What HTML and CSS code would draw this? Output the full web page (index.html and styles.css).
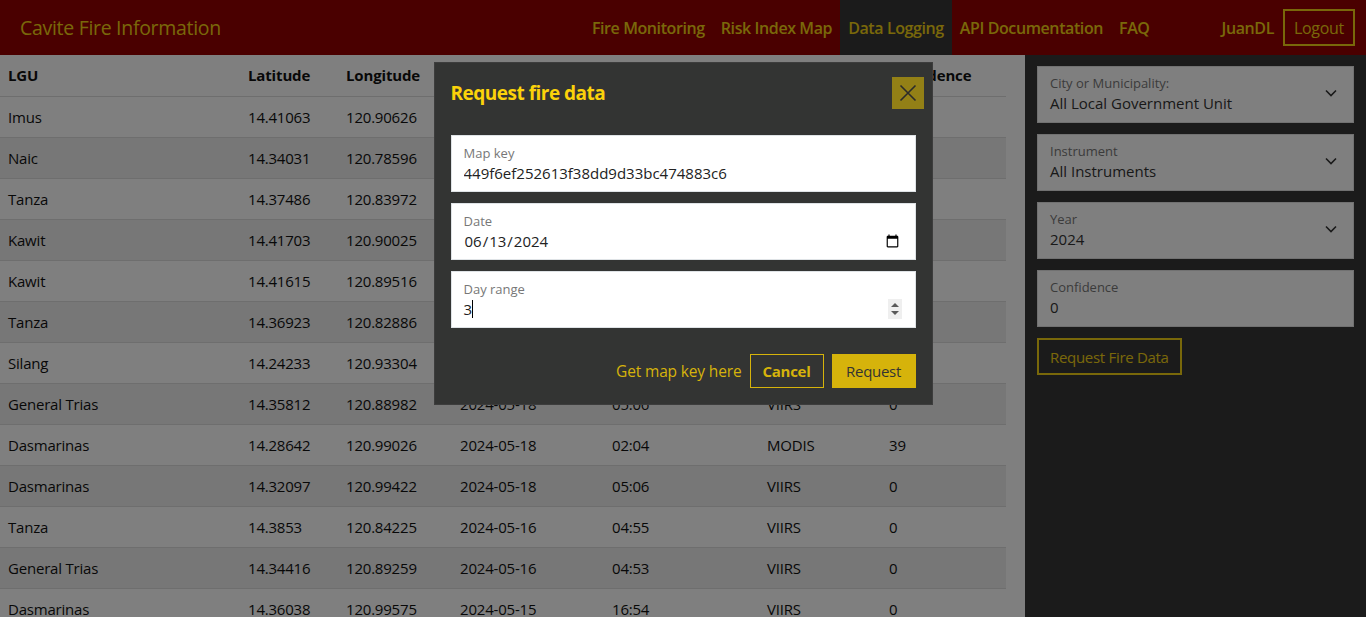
FILE: index.html
```html
<!DOCTYPE html>
<html lang="en">
<head>
<meta charset="utf-8">
<title>Cavite Fire Information - Data Logging</title>
<link rel="stylesheet" href="styles.css">
</head>
<body>
<header class="topbar">
  <a class="brand" href="#">Cavite Fire Information</a>
  <nav class="nav">
    <a class="nav-link" href="#">Fire Monitoring</a>
    <a class="nav-link" href="#">Risk Index Map</a>
    <a class="nav-link active" href="#">Data Logging</a>
    <a class="nav-link" href="#">API Documentation</a>
    <a class="nav-link" href="#">FAQ</a>
  </nav>
  <div class="user">
    <a class="nav-link user-name" href="#">JuanDL</a>
    <button class="btn-outline logout">Logout</button>
  </div>
</header>

<div class="layout">
  <main class="main">
    <table class="data-table">
      <colgroup>
        <col class="c-lgu"><col class="c-lat"><col class="c-lon"><col class="c-date"><col class="c-time"><col class="c-inst"><col class="c-conf">
      </colgroup>
      <thead>
        <tr><th>LGU</th><th>Latitude</th><th>Longitude</th><th>Date</th><th>Time</th><th>Instrument</th><th>Confidence</th></tr>
      </thead>
      <tbody>
        <tr><td>Imus</td><td>14.41063</td><td>120.90626</td><td>2024-05-23</td><td>05:12</td><td>VIIRS</td><td>0</td></tr>
        <tr><td>Naic</td><td>14.34031</td><td>120.78596</td><td>2024-05-22</td><td>04:50</td><td>VIIRS</td><td>0</td></tr>
        <tr><td>Tanza</td><td>14.37486</td><td>120.83972</td><td>2024-05-22</td><td>04:50</td><td>VIIRS</td><td>0</td></tr>
        <tr><td>Kawit</td><td>14.41703</td><td>120.90025</td><td>2024-05-21</td><td>05:08</td><td>VIIRS</td><td>0</td></tr>
        <tr><td>Kawit</td><td>14.41615</td><td>120.89516</td><td>2024-05-21</td><td>05:08</td><td>VIIRS</td><td>0</td></tr>
        <tr><td>Tanza</td><td>14.36923</td><td>120.82886</td><td>2024-05-20</td><td>05:26</td><td>VIIRS</td><td>0</td></tr>
        <tr><td>Silang</td><td>14.24233</td><td>120.93304</td><td>2024-05-19</td><td>02:45</td><td>MODIS</td><td>45</td></tr>
        <tr><td>General Trias</td><td>14.35812</td><td>120.88982</td><td>2024-05-18</td><td>05:06</td><td>VIIRS</td><td>0</td></tr>
        <tr><td>Dasmarinas</td><td>14.28642</td><td>120.99026</td><td>2024-05-18</td><td>02:04</td><td>MODIS</td><td>39</td></tr>
        <tr><td>Dasmarinas</td><td>14.32097</td><td>120.99422</td><td>2024-05-18</td><td>05:06</td><td>VIIRS</td><td>0</td></tr>
        <tr><td>Tanza</td><td>14.3853</td><td>120.84225</td><td>2024-05-16</td><td>04:55</td><td>VIIRS</td><td>0</td></tr>
        <tr><td>General Trias</td><td>14.34416</td><td>120.89259</td><td>2024-05-16</td><td>04:53</td><td>VIIRS</td><td>0</td></tr>
        <tr><td>Dasmarinas</td><td>14.36038</td><td>120.99575</td><td>2024-05-15</td><td>16:54</td><td>VIIRS</td><td>0</td></tr>
      </tbody>
    </table>
  </main>

  <aside class="sidebar">
    <div class="field select-field">
      <div class="field-body">
        <span class="field-label">City or Municipality:</span>
        <span class="field-value">All Local Government Unit</span>
      </div>
      <svg class="chevron" width="12" height="8" viewBox="0 0 12 8"><path d="M1 1.5 L6 6.5 L11 1.5" fill="none" stroke="#333" stroke-width="1.6"/></svg>
    </div>
    <div class="field select-field">
      <div class="field-body">
        <span class="field-label">Instrument</span>
        <span class="field-value">All Instruments</span>
      </div>
      <svg class="chevron" width="12" height="8" viewBox="0 0 12 8"><path d="M1 1.5 L6 6.5 L11 1.5" fill="none" stroke="#333" stroke-width="1.6"/></svg>
    </div>
    <div class="field select-field">
      <div class="field-body">
        <span class="field-label">Year</span>
        <span class="field-value">2024</span>
      </div>
      <svg class="chevron" width="12" height="8" viewBox="0 0 12 8"><path d="M1 1.5 L6 6.5 L11 1.5" fill="none" stroke="#333" stroke-width="1.6"/></svg>
    </div>
    <div class="field">
      <div class="field-body">
        <span class="field-label">Confidence</span>
        <span class="field-value">0</span>
      </div>
    </div>
    <div class="side-actions">
      <button class="btn-outline side-btn">Request Fire Data</button>
    </div>
  </aside>
</div>

<div class="backdrop">
  <div class="modal">
    <div class="modal-head">
      <h2 class="modal-title">Request fire data</h2>
      <button class="close-btn" aria-label="Close">
        <svg width="18" height="18" viewBox="0 0 18 18"><path d="M1.5 1.5 L16.5 16.5 M16.5 1.5 L1.5 16.5" stroke="#2b2b2b" stroke-width="1.6" fill="none"/></svg>
      </button>
    </div>
    <div class="modal-body">
      <label class="mfield">
        <span class="field-label">Map key</span>
        <input class="minput" type="text" value="449f6ef252613f38dd9d33bc474883c6">
      </label>
      <label class="mfield">
        <span class="field-label">Date</span>
        <input class="minput" type="date" value="2024-06-13">
      </label>
      <div class="mfield">
        <span class="field-label">Day range</span>
        <div class="num-row">
          <span class="num-value">3<span class="caret"></span></span>
          <svg class="spinner" width="14" height="20" viewBox="0 0 14 20"><rect width="14" height="20" fill="#efefef"/><path d="M3 8 L7 4 L11 8 Z M3 12 L7 16 L11 12 Z" fill="#5a5a5a"/></svg>
        </div>
      </div>
    </div>
    <div class="modal-foot">
      <a class="key-link" href="#">Get map key here</a>
      <button class="cancel-btn">Cancel</button>
      <button class="request-btn">Request</button>
    </div>
  </div>
</div>
</body>
</html>
```

FILE: styles.css
```css
* { box-sizing: border-box; }

html, body {
  margin: 0;
  padding: 0;
  height: 100%;
}

body {
  font-family: "Open Sans", "Noto Sans", sans-serif;
  background: #ffffff;
  color: #222;
  overflow: hidden;
}

a { text-decoration: none; }

button { font-family: inherit; cursor: pointer; }

/* ---------- header ---------- */
.topbar {
  height: 55px;
  background: #940000;
  display: flex;
  align-items: stretch;
  padding: 0 11px 0 20px;
}

.brand {
  color: #f2d114;
  font-size: 19.5px;
  display: flex;
  align-items: center;
  margin-right: auto;
  letter-spacing: -0.3px;
}

.nav {
  display: flex;
  align-items: stretch;
}

.nav-link {
  color: #f2d114;
  font-size: 16px;
  font-weight: 600;
  padding: 0 8px;
  display: flex;
  align-items: center;
  letter-spacing: -0.4px;
}

.nav-link.active {
  background: #363636;
}

.user {
  display: flex;
  align-items: center;
  margin-left: 56px;
}

.user-name {
  align-self: stretch;
  margin-right: 1px;
}

.btn-outline {
  background: transparent;
  border: 2px solid #f2d114;
  color: #f2d114;
  font-size: 16px;
}

.logout {
  height: 37px;
  width: 72px;
  padding: 0;
  font-weight: 400;
  letter-spacing: -0.3px;
}

/* ---------- layout ---------- */
.layout {
  display: flex;
  height: calc(100% - 55px);
}

.main {
  flex: 1;
  min-width: 0;
  overflow: hidden;
}

.sidebar {
  width: 341px;
  flex: none;
  background: #363636;
  padding: 11px 12px;
  display: flex;
  flex-direction: column;
  gap: 11px;
}

/* ---------- table ---------- */
.data-table {
  width: 1006px;
  border-collapse: collapse;
  table-layout: fixed;
  font-size: 15px;
  color: #111;
}

.c-lgu { width: 240px; }
.c-lat { width: 98px; }
.c-lon { width: 114px; }
.c-date { width: 152px; }
.c-time { width: 155px; }
.c-inst { width: 122px; }
.c-conf { width: 125px; }

.data-table th {
  text-align: left;
  font-weight: 700;
  height: 41px;
  padding: 0 8px;
  border-bottom: 1px solid #dcdcdc;
  letter-spacing: -0.15px;
}

.data-table td {
  height: 41px;
  padding: 0 8px;
  border-bottom: 1px solid #dcdcdc;
  letter-spacing: -0.2px;
  white-space: nowrap;
}

.data-table tbody tr:nth-child(even) td {
  background: #eeeeee;
}

/* ---------- sidebar fields ---------- */
.field {
  background: #ffffff;
  border: 1px solid #e2e2e2;
  height: 57px;
  display: flex;
  align-items: center;
  padding: 0 13px 0 12px;
  flex: none;
}

.field-body {
  flex: 1;
  display: flex;
  flex-direction: column;
}

.field-label {
  font-size: 13px;
  color: #777;
  line-height: 17px;
}

.field-value {
  font-size: 15px;
  color: #333;
  line-height: 22px;
}

.chevron {
  margin-right: 3px;
  margin-top: -4px;
}

.side-actions {
  display: flex;
}

.side-btn {
  height: 37px;
  padding: 0 11px;
  font-size: 15px;
  letter-spacing: -0.3px;
}

/* ---------- modal ---------- */
.backdrop {
  position: fixed;
  inset: 0;
  background: rgba(0, 0, 0, 0.5);
  display: flex;
  justify-content: center;
  align-items: flex-start;
  padding-top: 62px;
}

.modal {
  width: 499px;
  background: #333433;
  border: 1px solid #3d3d3d;
  padding: 14px 16px 16px 16px;
  display: flex;
  flex-direction: column;
}

.modal-head {
  display: flex;
  align-items: center;
  justify-content: space-between;
  margin-right: -8px;
  margin-bottom: 26px;
}

.modal-title {
  margin: 0;
  color: #fbd20a;
  font-size: 19px;
  font-weight: 700;
  letter-spacing: -0.5px;
}

.close-btn {
  width: 32px;
  height: 32px;
  border: none;
  padding: 0;
  background: #938016;
  display: flex;
  align-items: center;
  justify-content: center;
}

.modal-body {
  display: flex;
  flex-direction: column;
  gap: 11px;
}

.mfield {
  background: #ffffff;
  border: 1px solid #dfe3e6;
  height: 57px;
  padding: 9px 13px 0 12px;
  display: flex;
  flex-direction: column;
}

.minput {
  border: none;
  outline: none;
  padding: 0;
  margin: 0;
  font-family: inherit;
  font-size: 15px;
  color: #222;
  height: 22px;
  width: 100%;
  background: transparent;
}

.num-row {
  display: flex;
  align-items: center;
  justify-content: space-between;
  height: 22px;
}

.num-value {
  font-size: 15px;
  color: #222;
  display: flex;
  align-items: center;
}

.caret {
  display: inline-block;
  width: 1px;
  height: 18px;
  background: #000;
}

.modal-foot {
  display: flex;
  justify-content: flex-end;
  align-items: center;
  margin-top: 26px;
  gap: 8px;
}

.key-link {
  color: #d6b30b;
  font-size: 15.5px;
  letter-spacing: -0.15px;
}

.cancel-btn {
  height: 34px;
  width: 74px;
  padding: 0;
  background: transparent;
  border: 1px solid #d6b30b;
  color: #d6b30b;
  font-size: 15px;
  font-weight: 700;
  letter-spacing: -0.3px;
}

.request-btn {
  height: 34px;
  width: 84px;
  padding: 0;
  background: #d6b30b;
  border: none;
  color: #333;
  font-size: 15px;
  letter-spacing: -0.3px;
}
```
